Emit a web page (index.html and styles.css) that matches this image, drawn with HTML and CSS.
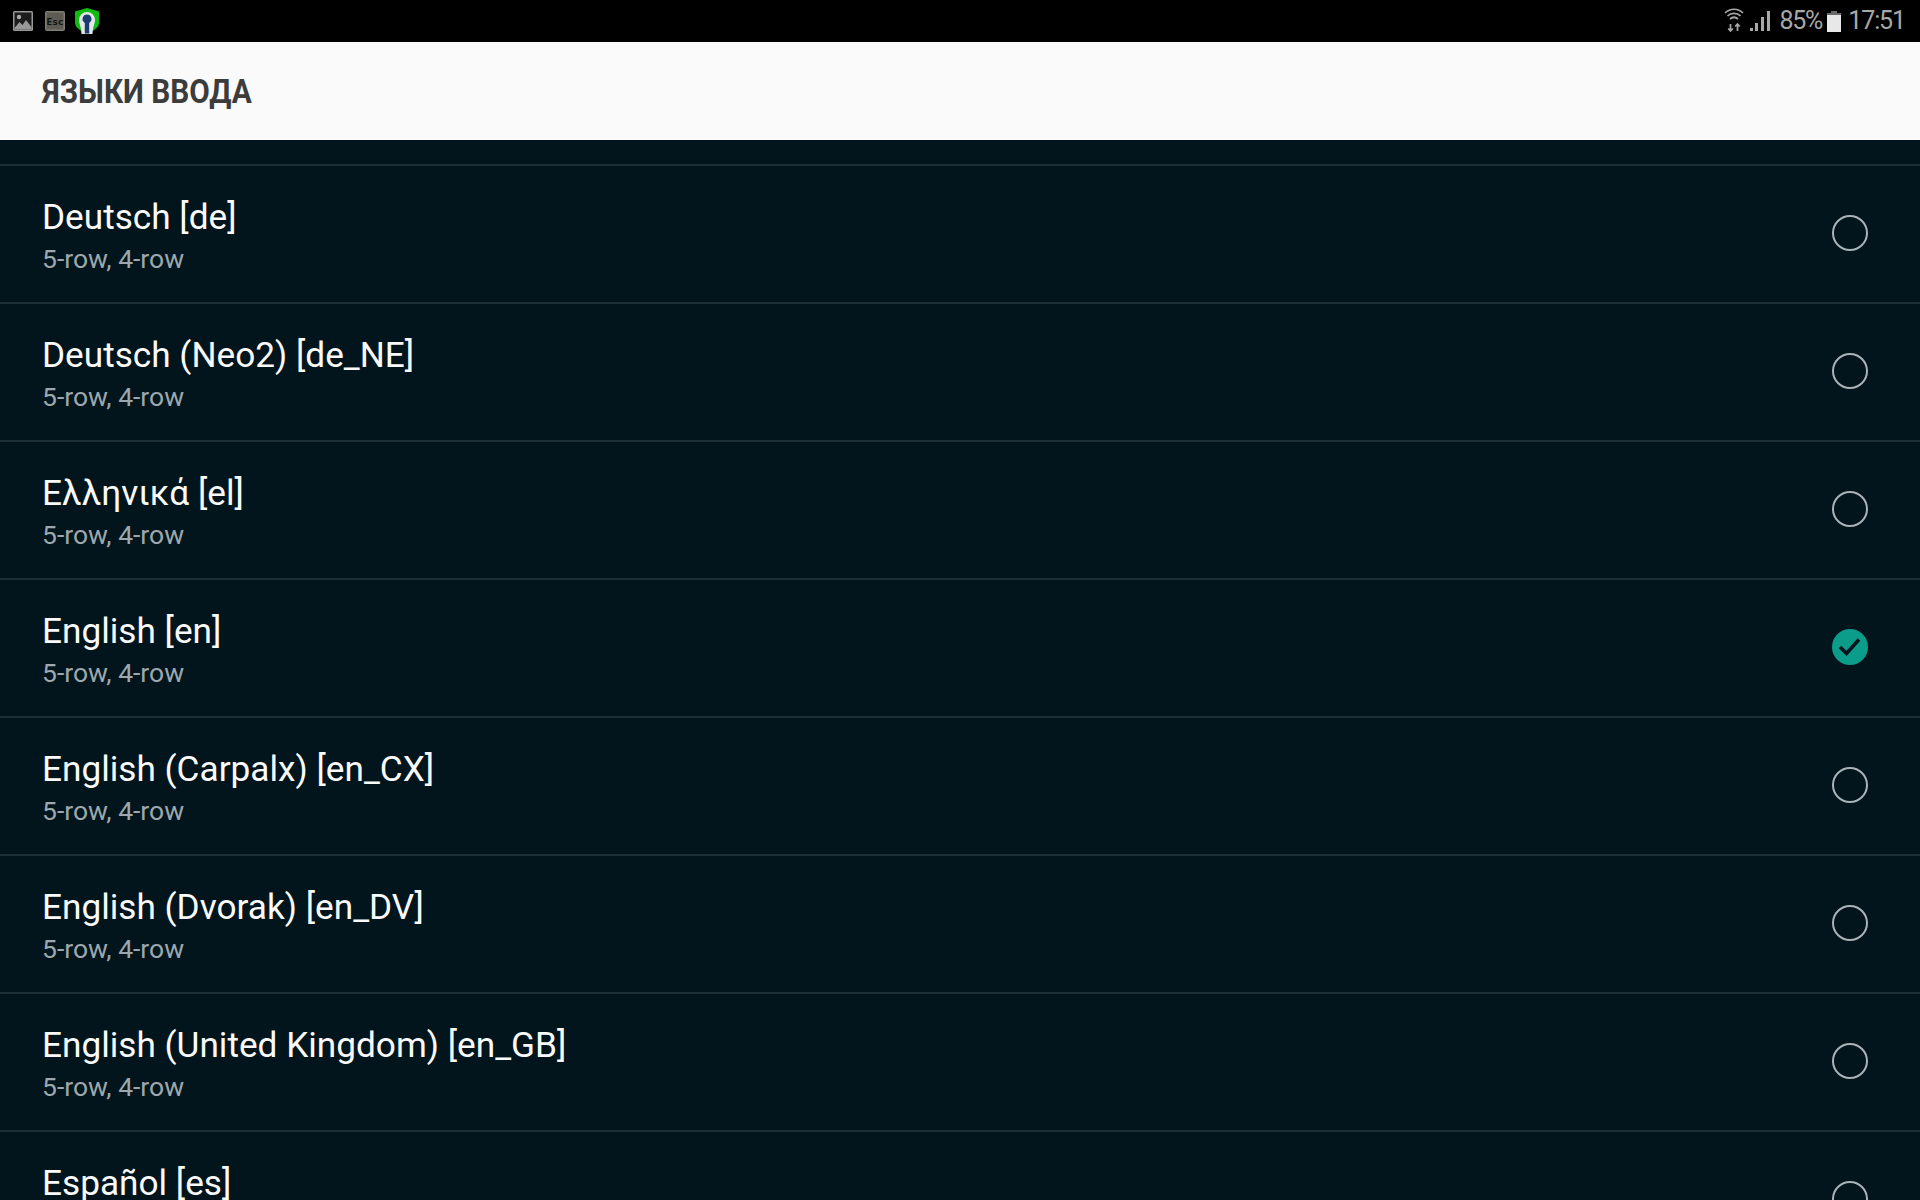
FILE: index.html
```html
<!DOCTYPE html>
<html lang="ru">
<head>
<meta charset="utf-8">
<title>Языки ввода</title>
<link rel="stylesheet" href="styles.css">
</head>
<body>
<div class="app">
  <div class="status">
    <div class="status-left">
      <svg class="ico" width="22" height="22" viewBox="0 0 22 22"><rect x="1" y="1" width="20" height="20" rx="1.500" fill="#989898"/><rect x="2.500" y="2.500" width="17" height="17" fill="#1c1c1c"/><circle cx="7" cy="7" r="2.200" fill="#a8a8a8"/><path d="M2.500 18l5-6 3 3 3.500-5 5.500 7v2.500h-17z" fill="#989898"/></svg>
      <svg class="ico esc" width="22" height="22" viewBox="0 0 22 22"><rect x="1" y="1" width="20" height="20" rx="2" fill="#7d7d72"/><rect x="2.500" y="2.500" width="17" height="17" fill="#5c5c52"/><text x="11" y="15" class="esc-text">Esc</text></svg>
      <svg class="ico vpn" width="26" height="26" viewBox="0 0 26 26"><path d="M13 0l12 3.500v11c0 5-5 8-12 11.500C6 22.500 1 19.500 1 14.500v-11z" fill="#12bb12"/><path d="M5 12a8 8 0 0 1 16 0c0 4-2 5-2.500 14h-11C7 17 5 16 5 12z" fill="#e2e8e8"/><path d="M13 6.500a4.500 4.500 0 0 1 2.200 8.400V25.500h-4.400V14.900A4.500 4.500 0 0 1 13 6.500z" fill="#1c3b6e"/></svg>
    </div>
    <div class="status-right">
      <svg class="wifi" width="20" height="26" viewBox="0 0 20 26" fill="none" stroke="#a8a8a8" stroke-width="1.700"><path d="M1 6c5-5 13-5 18 0M3.500 9c3.500-3.500 9.500-3.500 13 0M6 12c2.500-2.200 5.500-2.200 8 0"/><path d="M6.500 17v7M4.200 21.500l2.300 2.500 2.300-2.500M13.500 24v-7M11.200 19.500l2.300-2.500 2.300 2.500"/></svg>
      <svg class="signal" width="20" height="20" viewBox="0 0 20 20"><path d="M0 20h3v-3H0zM5 20h3v-8H5zM11 20h3V6h-3zM17 20h3V0h-3z" fill="#a8a8a8"/></svg>
      <span class="stat-text pct">85%</span>
      <svg class="batt" width="14" height="21" viewBox="0 0 14 21"><path d="M4 0h6v2h4v19H0V2h4z" fill="#6a6a6a"/><rect x="0" y="4" width="14" height="17" fill="#e8e8e8"/></svg>
      <span class="stat-text time">17:51</span>
    </div>
  </div>
  <header class="bar"><h1 class="bar-title">ЯЗЫКИ ВВОДА</h1></header>
  <main class="list">
    <div class="gap"></div>
    <div class="row"><div class="txt"><div class="name">Deutsch [de]</div><div class="sub">5-row, 4-row</div></div><span class="radio"></span></div>
    <div class="row"><div class="txt"><div class="name">Deutsch (Neo2) [de_NE]</div><div class="sub">5-row, 4-row</div></div><span class="radio"></span></div>
    <div class="row"><div class="txt"><div class="name">Ελληνικά [el]</div><div class="sub">5-row, 4-row</div></div><span class="radio"></span></div>
    <div class="row"><div class="txt"><div class="name">English [en]</div><div class="sub">5-row, 4-row</div></div><svg class="check" width="36" height="36" viewBox="0 0 36 36"><circle cx="18" cy="18" r="18" fill="#0b9c8a"/><path d="M8 18l6.500 6.500L27 10.500" fill="none" stroke="#02141c" stroke-width="3.600"/></svg></div>
    <div class="row"><div class="txt"><div class="name">English (Carpalx) [en_CX]</div><div class="sub">5-row, 4-row</div></div><span class="radio"></span></div>
    <div class="row"><div class="txt"><div class="name">English (Dvorak) [en_DV]</div><div class="sub">5-row, 4-row</div></div><span class="radio"></span></div>
    <div class="row"><div class="txt"><div class="name">English (United Kingdom) [en_GB]</div><div class="sub">5-row, 4-row</div></div><span class="radio"></span></div>
    <div class="row"><div class="txt"><div class="name">Español [es]</div><div class="sub">5-row, 4-row</div></div><span class="radio"></span></div>
  </main>
</div>
</body>
</html>
```
FILE: styles.css
```css
* { box-sizing: border-box; }
html, body { margin: 0; height: 100%; }
body { background: #02141c; font-family: Roboto, "Noto Sans", sans-serif; overflow: hidden; }
.app { display: flex; flex-direction: column; height: 1200px; }

.status { height: 42px; flex: none; background: #000; display: flex; justify-content: space-between; align-items: center; padding: 0 15px 0 12px; }
.status-left { display: flex; align-items: center; }
.ico { display: block; }
.esc { margin-left: 10px; }
.vpn { margin-left: 8px; }
.esc-text { font: bold 9.500px "DejaVu Sans Mono", monospace; fill: #111; text-anchor: middle; }
.status-right { display: flex; align-items: center; }
.wifi { margin-right: 6px; margin-top: -2px; }
.signal { margin-right: 9px; margin-top: -1px; }
.stat-text { color: #a8a8a8; font-size: 25px; font-weight: 400; line-height: 42px; display: inline-block; }
.pct { letter-spacing: -1.200px; }
.time { letter-spacing: -1.100px; }
.batt { margin: 0 7px 0 5px; }

.bar { height: 98px; flex: none; background: #fafafa; display: flex; align-items: center; padding: 0 42px; }
.bar-title { margin: 0; font-size: 34px; line-height: 40px; font-weight: 700; color: #3c3c3c; transform: scaleX(.875); transform-origin: left center; white-space: nowrap; }

.list { flex: 1; overflow: hidden; }
.gap { height: 26px; border-bottom: 2px solid #1e2e35; }
.row { height: 138px; flex: none; border-bottom: 2px solid #1e2e35; display: flex; justify-content: space-between; align-items: center; padding: 0 52px 2px 42px; }
.txt { display: flex; flex-direction: column; align-self: flex-start; padding-top: 29px; }
.name { font-size: 35.200px; line-height: 44px; color: #fafafa; white-space: nowrap; }
.sub { font-size: 26.500px; line-height: 36px; color: #9ca8ae; white-space: nowrap; margin-top: 2px; }
.radio { width: 36px; height: 36px; border-radius: 50%; border: 2px solid #aab3b7; flex: none; }
.check { flex: none; display: block; }
```
